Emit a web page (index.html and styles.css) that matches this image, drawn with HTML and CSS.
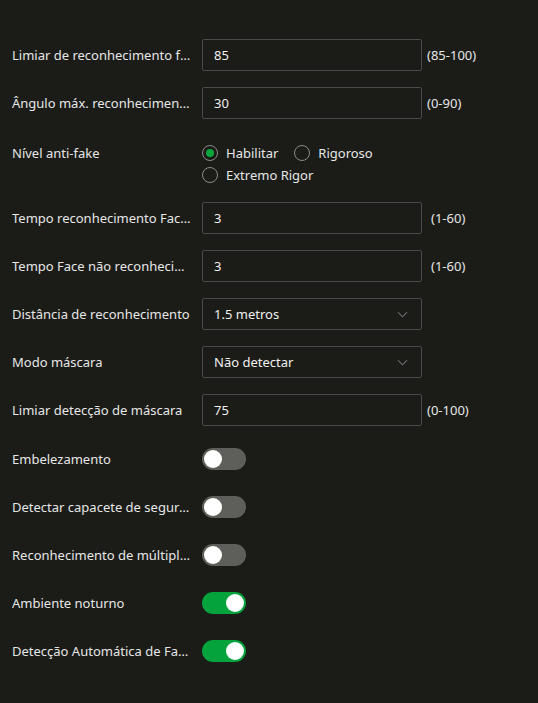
FILE: index.html
```html
<!DOCTYPE html>
<html>
  <head>
    <title>Reconhecimento facial</title>
    <link rel="stylesheet" href="styles.css">
  </head>
  <body>
    <div class="container">
      <form class="settings" onsubmit="event.preventDefault()">
        <div class="row">
          <label class="name" for="threshold">Limiar de reconhecimento facial</label>
          <input class="field" type="text" id="threshold" value="85" />
          <span class="range">(85-100)</span>
        </div>
        <div class="row">
          <label class="name" for="angle">Ângulo máx. reconhecimento facial</label>
          <input class="field" type="text" id="angle" value="30" />
          <span class="range">(0-90)</span>
        </div>
        <div class="row row-radio">
          <label class="name">Nível anti-fake</label>
          <div class="radios">
            <label class="radio"><input type="radio" name="fake" checked /><span class="dot"></span>Habilitar</label>
            <label class="radio"><input type="radio" name="fake" /><span class="dot"></span>Rigoroso</label>
            <label class="radio"><input type="radio" name="fake" /><span class="dot"></span>Extremo Rigor</label>
          </div>
        </div>
        <div class="row">
          <label class="name" for="time-ok">Tempo reconhecimento Face reconhecida</label>
          <input class="field" type="text" id="time-ok" value="3" />
          <span class="range range-wide">(1-60)</span>
        </div>
        <div class="row">
          <label class="name" for="time-fail">Tempo Face não reconhecida novamente</label>
          <input class="field" type="text" id="time-fail" value="3" />
          <span class="range range-wide">(1-60)</span>
        </div>
        <div class="row">
          <label class="name">Distância de reconhecimento</label>
          <div class="field select">1.5 metros<span class="chevron"></span></div>
        </div>
        <div class="row">
          <label class="name">Modo máscara</label>
          <div class="field select">Não detectar<span class="chevron"></span></div>
        </div>
        <div class="row">
          <label class="name" for="mask">Limiar detecção de máscara</label>
          <input class="field" type="text" id="mask" value="75" />
          <span class="range">(0-100)</span>
        </div>
        <div class="row row-first-toggle">
          <label class="name">Embelezamento</label>
          <span class="toggle"></span>
        </div>
        <div class="row">
          <label class="name">Detectar capacete de segurança</label>
          <span class="toggle"></span>
        </div>
        <div class="row">
          <label class="name">Reconhecimento de múltiplas faces</label>
          <span class="toggle"></span>
        </div>
        <div class="row">
          <label class="name">Ambiente noturno</label>
          <span class="toggle on"></span>
        </div>
        <div class="row">
          <label class="name">Detecção Automática de Face mascarada</label>
          <span class="toggle on"></span>
        </div>
      </form>
    </div>
  </body>
</html>
```

FILE: styles.css
```css
body {
  font-family: "Noto Sans", Arial, sans-serif;
  font-size: 13px;
  margin: 0;
  padding: 0;
  background-color: #1b1c18;
  color: #e6e6e6;
}

.container {
  padding: 39px 0 0 12px;
}

.settings {
  display: flex;
  flex-direction: column;
  gap: 16px;
}

.row {
  display: flex;
  align-items: center;
  min-height: 32px;
}

.name {
  width: 180px;
  padding-right: 10px;
  white-space: nowrap;
  overflow: hidden;
  text-overflow: ellipsis;
  flex-shrink: 0;
}

.field {
  width: 220px;
  height: 32px;
  box-sizing: border-box;
  padding: 0 11px;
  background-color: #1b1c18;
  border: 1px solid #4a4a4c;
  border-radius: 2px;
  color: #f0f0f0;
  font-family: inherit;
  font-size: 13px;
  outline: none;
}

.select {
  display: flex;
  align-items: center;
  justify-content: space-between;
}

.chevron {
  width: 6px;
  height: 6px;
  border-right: 1px solid #6b6b6b;
  border-bottom: 1px solid #6b6b6b;
  transform: rotate(45deg);
  margin: -4px 4px 0 0;
}

.range {
  margin-left: 5px;
}

.range-wide {
  margin-left: 9px;
}

.row-radio {
  align-items: flex-start;
  padding-top: 7px;
}

.row-radio .name {
  line-height: 22px;
}

.radios {
  display: flex;
  flex-wrap: wrap;
  width: 200px;
  column-gap: 16px;
}

.radio {
  display: flex;
  align-items: center;
  line-height: 22px;
  cursor: pointer;
}

.radio input {
  display: none;
}

.dot {
  width: 16px;
  height: 16px;
  box-sizing: border-box;
  border: 1px solid #8a8a8a;
  border-radius: 50%;
  margin-right: 8px;
  display: flex;
  align-items: center;
  justify-content: center;
}

.radio input:checked + .dot::after {
  content: "";
  width: 8px;
  height: 8px;
  border-radius: 50%;
  background-color: #0aa53c;
}

.row-first-toggle {
  margin-top: 1px;
}

.toggle {
  position: relative;
  width: 44px;
  height: 22px;
  border-radius: 11px;
  background-color: #5e5f5b;
}

.toggle::after {
  content: "";
  position: absolute;
  top: 2px;
  left: 2px;
  width: 18px;
  height: 18px;
  border-radius: 50%;
  background-color: #fff;
}

.toggle.on {
  background-color: #05a33b;
}

.toggle.on::after {
  left: 24px;
}
```
